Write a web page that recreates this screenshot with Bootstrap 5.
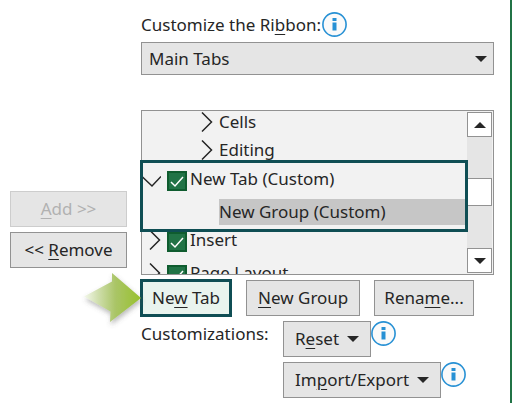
<!DOCTYPE html>
<html lang="en">
<head>
<meta charset="utf-8">
<meta name="viewport" content="width=device-width, initial-scale=1">
<title>Customize the Ribbon</title>
<link href="https://cdn.jsdelivr.net/npm/bootstrap@5.3.0/dist/css/bootstrap.min.css" rel="stylesheet">
<style>
body{font:17px/24px "Noto Sans",sans-serif;color:#262626;background:#fff}
.dialog-page{border-right:2px solid #217346;padding:12px 16px 4px 10px;gap:14px}
.transfer{width:117px;padding-top:179px;gap:5px}
u{text-decoration-thickness:1px;text-underline-offset:3px}
.btn-office{--bs-btn-bg:#e5e5e5;--bs-btn-color:#262626;--bs-btn-border-color:#929292;--bs-btn-hover-bg:#d8d8d8;--bs-btn-hover-color:#262626;--bs-btn-disabled-bg:#e5e5e5;--bs-btn-disabled-color:#b1b1b1;--bs-btn-disabled-border-color:#cdcdcd;--bs-btn-disabled-opacity:1;--bs-btn-border-radius:0;--bs-btn-font-size:17px;--bs-btn-line-height:24px;--bs-btn-padding-y:5px;--bs-btn-padding-x:11px;white-space:nowrap}
.transfer .btn-office{--bs-btn-padding-x:0}
.btn-office svg{margin-left:8px;vertical-align:3px}
.btn-snug{--bs-btn-padding-x:9px}
.btn-marked{--bs-btn-bg:#e9f4ee;--bs-btn-border-color:#0f4e54;--bs-btn-border-width:3px;--bs-btn-padding-x:9px;--bs-btn-padding-y:4px;margin:-1px 0 -1px -1px}
.scope-line{gap:1px}
.tab-scope{height:33px;border:1px solid #929292;border-radius:0;background:#e5e5e5 url("data:image/svg+xml,%3Csvg xmlns='http://www.w3.org/2000/svg' viewBox='0 0 12 6'%3E%3Cpath d='M0 0h12L6 6z' fill='%23262626'/%3E%3C/svg%3E") no-repeat right 6px center/12px 6px;padding:0 24px 0 7px;margin-top:5px;font-size:17px;line-height:24px;color:#262626}
.tree-box{height:165px;border:1px solid #929292;background:#f2f2f2;margin-top:35px}
.tree-view{margin-top:-3px}
.tree-row{height:28px;display:flex;align-items:center;white-space:nowrap}
.tree-child{padding-left:59px;gap:6px}
.tree-tab{padding-left:7px}
.tree-open{margin-top:1px}
.tree-check{appearance:none;width:20px;height:20px;margin:4px 3px 0 6px;border:2px solid #0f5c2f;background:#217346 url("data:image/svg+xml,%3Csvg xmlns='http://www.w3.org/2000/svg' viewBox='0 0 16 16'%3E%3Cpath d='M2 9l4 4 8-9' fill='none' stroke='white' stroke-width='1.5'/%3E%3C/svg%3E") center/16px}
.picked{background:#c6c6c6;margin:6px 0 1px 77px;height:26px;line-height:26px}
.tree-next{margin-top:5px}
.scroll-rail{width:25px;margin:1px 1px 1px 0;background:#e5e5e5}
.scroll-key{height:25px;border:1px solid #929292;background:#fff;padding:0;display:flex;align-items:center;justify-content:center}
.scroll-thumb{height:28px;margin-top:41px;border:1px solid #929292;background:#fff}
.highlight-frame{position:absolute;left:-2px;right:25px;top:49px;height:72px;border:3px solid #0f4e54}
.tab-actions{margin-top:5px;gap:14px}
.pointer-arrow{position:absolute;right:100%;top:-14px;margin-right:-7px}
.extras{margin-top:5px}
.extras-label{width:142px;line-height:26px}
.extras-list{gap:5px}
</style>
</head>
<body>
<svg class="d-none" aria-hidden="true">
<symbol id="info" viewBox="0 0 25 25"><circle cx="12.5" cy="12.5" r="11.6" fill="#fafafa" stroke="#2690d4" stroke-width="1.6"/><path d="M10.500 6h4v3h-4zM10.500 10.500h4v8h-4z" fill="#2690d4"/></symbol>
<symbol id="right" viewBox="0 0 12 20"><path d="M1 .5L10.500 10 1 19.500" fill="none" stroke="#262626" stroke-width="1.500"/></symbol>
<symbol id="caret" viewBox="0 0 12 6"><path d="M0 0h12L6 6z" fill="#262626"/></symbol>
</svg>
<main class="dialog-page d-flex min-vh-100">
<div class="transfer d-flex flex-column flex-shrink-0">
<button class="btn btn-office" type="button" disabled><u>A</u>dd &gt;&gt;</button>
<button class="btn btn-office" type="button">&lt;&lt; <u>R</u>emove</button>
</div>
<div class="flex-grow-1">
<div class="scope-line d-flex align-items-center">
<label for="scope">Customize the Ri<u>b</u>bon:</label>
<svg width="25" height="25"><use href="#info"/></svg>
</div>
<select class="form-select tab-scope" id="scope"><option>Main Tabs</option></select>
<div class="tree-box d-flex position-relative">
<div class="flex-grow-1 overflow-hidden">
<div class="tree-view">
<div class="tree-row tree-child"><svg width="12" height="20"><use href="#right"/></svg><span>Cells</span></div>
<div class="tree-row tree-child"><svg width="12" height="20"><use href="#right"/></svg><span>Editing</span></div>
<div class="tree-row tree-open"><svg class="mt-1" width="19" height="14" viewBox="0 0 19 14"><path d="M0 2.500L10 12 19 2.500" fill="none" stroke="#262626" stroke-width="1.500"/></svg><input class="tree-check" type="checkbox" id="custom" checked><label for="custom">New Tab (Custom)</label></div>
<div class="picked">New Group (Custom)</div>
<div class="tree-row tree-tab"><svg width="12" height="20"><use href="#right"/></svg><input class="tree-check" type="checkbox" id="insert" checked><label for="insert">Insert</label></div>
<div class="tree-row tree-tab tree-next"><svg width="12" height="20"><use href="#right"/></svg><input class="tree-check" type="checkbox" id="layout" checked><label for="layout">Page Layout</label></div>
</div>
</div>
<div class="scroll-rail d-flex flex-column flex-shrink-0">
<button class="scroll-key" type="button" aria-label="Scroll up"><svg width="12" height="6"><path d="M0 6h12L6 0z" fill="#262626"/></svg></button>
<div class="scroll-thumb"></div>
<button class="scroll-key mt-auto" type="button" aria-label="Scroll down"><svg width="12" height="6"><use href="#caret"/></svg></button>
</div>
<div class="highlight-frame pe-none"></div>
</div>
<div class="tab-actions d-flex position-relative">
<svg class="pointer-arrow pe-none" width="70" height="64" viewBox="0 0 70 64" aria-hidden="true">
<defs>
<linearGradient id="leaf" x1="0" y1="0" x2="1" y2="0"><stop offset="0" stop-color="#f4f8ec"/><stop offset=".25" stop-color="#cfdeac"/><stop offset=".55" stop-color="#aac567"/><stop offset="1" stop-color="#98c12d"/></linearGradient>
<filter id="shade" x="-20%" y="-20%" width="140%" height="150%"><feDropShadow dx="1" dy="3" stdDeviation="2.500" flood-color="#555" flood-opacity=".4"/></filter>
</defs>
<path d="M6 30.500L34 15.500V7L63 32 32 56 32.500 45.500Z" fill="url(#leaf)" filter="url(#shade)"/>
</svg>
<button class="btn btn-office btn-marked" type="button">Ne<u>w</u> Tab</button>
<button class="btn btn-office" type="button"><u>N</u>ew Group</button>
<button class="btn btn-office btn-snug" type="button">Rena<u>m</u>e...</button>
</div>
<div class="extras d-flex">
<div class="extras-label flex-shrink-0">Customizations:</div>
<div class="extras-list d-flex flex-column">
<div class="d-flex"><button class="btn btn-office" type="button">R<u>e</u>set<svg width="12" height="6"><use href="#caret"/></svg></button><svg width="25" height="25"><use href="#info"/></svg></div>
<div class="d-flex"><button class="btn btn-office" type="button">Im<u>p</u>ort/Export<svg width="12" height="6"><use href="#caret"/></svg></button><svg width="25" height="25"><use href="#info"/></svg></div>
</div>
</div>
</div>
</main>
<script src="https://cdn.jsdelivr.net/npm/bootstrap@5.3.0/dist/js/bootstrap.bundle.min.js"></script>
</body>
</html>
